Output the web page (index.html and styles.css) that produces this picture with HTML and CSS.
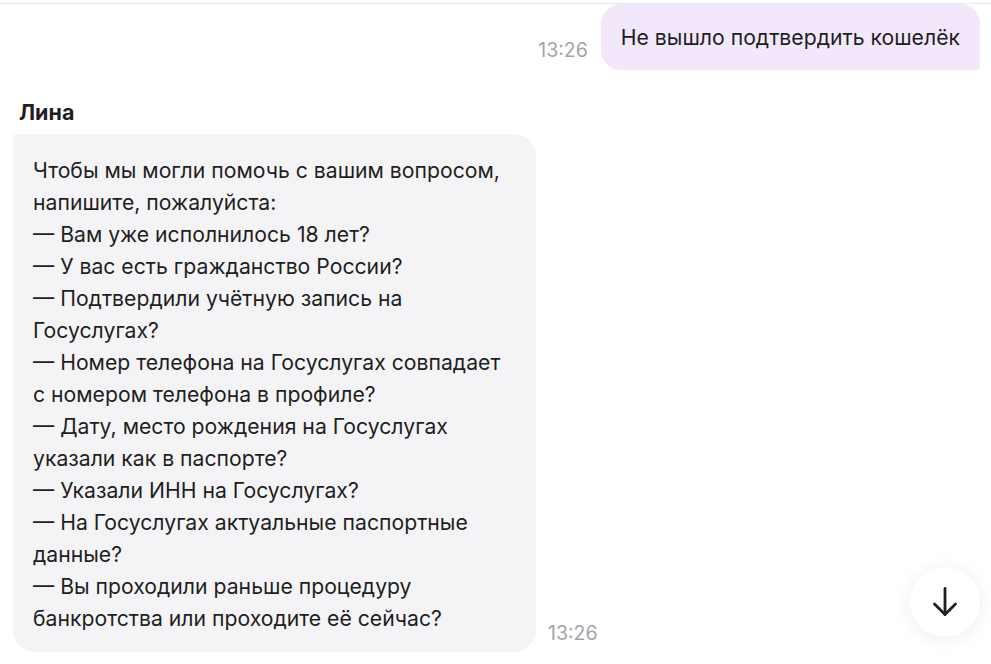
FILE: index.html
```html
<!DOCTYPE html>
<html lang="ru">
<head>
<meta charset="utf-8">
<link rel="stylesheet" href="styles.css">
</head>
<body>
<div class="chat">
  <div class="topline"></div>
  <div class="row row-out">
    <span class="time">13:26</span>
    <div class="bubble bubble-out">Не вышло подтвердить кошелёк</div>
  </div>
  <div class="sender">Лина</div>
  <div class="row row-in">
    <div class="bubble bubble-in">Чтобы мы могли помочь с вашим вопросом, напишите, пожалуйста:<br>— Вам уже исполнилось 18 лет?<br>— У вас есть гражданство России?<br>— Подтвердили учётную запись на Госуслугах?<br>— Номер телефона на Госуслугах совпадает с номером телефона в профиле?<br>— Дату, место рождения на Госуслугах указали как в паспорте?<br>— Указали ИНН на Госуслугах?<br>— На Госуслугах актуальные паспортные данные?<br>— Вы проходили раньше процедуру банкротства или проходите её сейчас?</div>
    <span class="time">13:26</span>
  </div>
  <button class="scroll-down" aria-label="Вниз">
    <svg width="30" height="32" viewBox="0 0 30 32" fill="none" stroke="#1f1f22" stroke-width="2.8" stroke-linecap="round" stroke-linejoin="round"><path d="M15 2.5v26"/><path d="M4.5 18 15 28.5 25.5 18"/></svg>
  </button>
</div>
</body>
</html>
```
FILE: styles.css
```css
html, body {
  margin: 0;
  padding: 0;
  background: #ffffff;
}
body {
  font-family: Inter, "Noto Sans", sans-serif;
  color: #1f1f22;
  width: 991px;
  height: 664px;
  overflow: hidden;
}
.chat {
  position: relative;
  height: 664px;
}
.topline {
  height: 3px;
  border-bottom: 1px solid #e8e8ea;
}
.row {
  display: flex;
  align-items: flex-end;
}
.row-out {
  justify-content: flex-end;
  padding-right: 11px;
}
.time {
  font-size: 19.5px;
  color: #a3a3ab;
  line-height: 22px;
}
.row-out .time {
  margin-right: 13px;
  margin-bottom: 9px;
}
.bubble {
  font-size: 21.2px;
  line-height: 32px;
}
.bubble-out {
  background: #f3e7fc;
  padding: 17px 20px 17px 20px;
  border-radius: 20px 20px 4px 20px;
}
.sender {
  font-weight: 700;
  font-size: 21.5px;
  line-height: 26px;
  margin: 29px 0 0 19px;
}
.row-in {
  margin-top: 9px;
  padding-left: 13px;
}
.bubble-in {
  background: #f4f4f6;
  width: 483px;
  padding: 20px 20px 18px 20px;
  border-radius: 4px 22px 22px 22px;
}
.row-in .time {
  margin-left: 12px;
  margin-bottom: 8px;
}
.scroll-down {
  position: absolute;
  left: 910px;
  top: 567px;
  width: 70px;
  height: 70px;
  border-radius: 50%;
  border: none;
  background: #ffffff;
  box-shadow: 0 2px 20px rgba(0, 0, 0, 0.07);
  display: flex;
  align-items: center;
  justify-content: center;
  padding: 0;
}
```
